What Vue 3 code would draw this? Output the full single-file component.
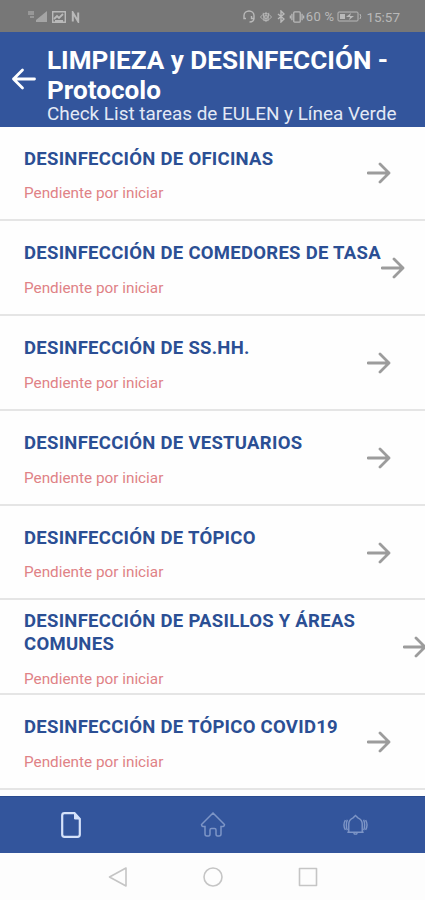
<template>
  <div class="app">
    <!-- Barra de estado -->
    <div class="statusbar">
      <div class="status-left">
        <svg class="signal" viewBox="0 0 21 14">
          <path class="net" d="M1 1v4M3 1v4M5 1v4M2 7h4" />
          <path class="bars" d="M8 12V10l11-9v11z" />
        </svg>
        <svg class="picture" viewBox="0 0 14 12">
          <rect x="0.5" y="0.5" width="13" height="11" rx="1" />
          <path d="M2 8l3-3 2 2 4-4M3 10h8" />
        </svg>
        <svg class="nfc" viewBox="0 0 10 12">
          <path d="M2 11V1l6 10V1" />
        </svg>
      </div>
      <div class="status-right">
        <svg class="headset" viewBox="0 0 12 13">
          <path d="M3 8.500H1V5.500a5 4.500 0 0 1 10 0v3H8.500V6M11 8q0 4-4.500 4" />
        </svg>
        <svg class="eye" viewBox="0 0 14 13">
          <path d="M1 6.500q6-8 12 0q-6 8-12 0M7 1v11M4 2l1 9M10 2l-1 9" />
          <circle cx="7" cy="6.500" r="2" />
        </svg>
        <svg class="bluetooth" viewBox="0 0 8 13">
          <path d="M1 4l6 5-3 3V1l3 3-6 5" />
        </svg>
        <svg class="vibrate" viewBox="0 0 16 13">
          <rect x="4.500" y="1" width="7" height="11" rx="1" />
          <path d="M2.500 3v7M13.500 3v7M0.800 5v3M15.200 5v3" />
        </svg>
        <span class="percent">60 %</span>
        <svg class="battery" viewBox="0 0 25 11">
          <rect x="1" y="1" width="20" height="9" rx="1" />
          <path class="charge" d="M3 3h5v5H3zM9 6l5-4-1 3h4l-5 4 1-3z" />
          <path d="M23 3q1.500 2.500 0 5" />
        </svg>
        <span class="clock">15:57</span>
      </div>
    </div>

    <!-- Cabecera -->
    <header class="header">
      <svg class="back" viewBox="0 0 24 22">
        <path d="M23 11H2M11 2L2 11l9 9" />
      </svg>
      <div class="heading">
        <h1>LIMPIEZA y DESINFECCIÓN - Protocolo</h1>
        <p>Check List tareas de EULEN y Línea Verde</p>
      </div>
    </header>

    <!-- Lista de tareas -->
    <main class="list">
      <div v-for="task in tasks" :key="task.title" class="row">
        <div class="info">
          <div class="title">{{ task.title }}</div>
          <div class="state">{{ task.state }}</div>
        </div>
        <svg class="arrow" viewBox="0 0 24 22">
          <path d="M1 11h21M13 2l9 9-9 9" />
        </svg>
      </div>
    </main>

    <!-- Pestañas -->
    <nav class="tabs">
      <div v-for="tab in tabs" :key="tab" class="tab" :class="{ active: tab === activeTab }" @click="activeTab = tab">
        <svg v-if="tab === 'doc'" class="doc" viewBox="0 0 20 26">
          <path d="M3.500 1.200H13.500L18.800 7V22.500a2.300 2.300 0 0 1-2.300 2.300H3.500a2.300 2.300 0 0 1-2.300-2.300V3.500a2.300 2.300 0 0 1 2.300-2.300z" />
          <path class="fold" d="M13.500 1.200V7h5.300z" />
        </svg>
        <svg v-else-if="tab === 'home'" class="home" viewBox="0 0 26 26">
          <path d="M13 1L1.500 12.500q0 2.500 3.500 2v7.500q0 2 2 2h1.500q1.500 0 1.500-2v-4q0-1.500 1.500-1.500h3q1.500 0 1.500 1.500v4q0 2 1.500 2H19q2 0 2-2v-7.500q3.500 0.500 3.500-2z" />
        </svg>
        <svg v-else class="bell" viewBox="0 0 26 22">
          <path d="M13 1.200L15.500 3.500q4.500 2 4.500 6.500v8.500H6v-8.500q0-4.500 4.500-6.500zM4.500 18.500h17M11 19.500q2 2 4 0" />
          <path d="M4.500 5.500q-2 5.500 0 11M21.500 5.500q2 5.500 0 11M2.500 6q-3 5 0 10M23.500 6q3 5 0 10" />
        </svg>
      </div>
    </nav>

    <!-- Botones del sistema -->
    <div class="system">
      <svg viewBox="0 0 20 20"><path d="M18 1v18L1.500 10z" /></svg>
      <svg viewBox="0 0 20 20"><circle cx="10" cy="10" r="9" /></svg>
      <svg viewBox="0 0 20 20"><rect x="1.500" y="1.500" width="17" height="17" /></svg>
    </div>
  </div>
</template>

<script setup>
import { ref } from 'vue'

const tasks = ref([
  { title: 'DESINFECCIÓN DE OFICINAS', state: 'Pendiente por iniciar' },
  { title: 'DESINFECCIÓN DE COMEDORES DE TASA', state: 'Pendiente por iniciar' },
  { title: 'DESINFECCIÓN DE SS.HH.', state: 'Pendiente por iniciar' },
  { title: 'DESINFECCIÓN DE VESTUARIOS', state: 'Pendiente por iniciar' },
  { title: 'DESINFECCIÓN DE TÓPICO', state: 'Pendiente por iniciar' },
  { title: 'DESINFECCIÓN DE PASILLOS Y ÁREAS COMUNES', state: 'Pendiente por iniciar' },
  { title: 'DESINFECCIÓN DE TÓPICO COVID19', state: 'Pendiente por iniciar' }
])

const tabs = ['doc', 'home', 'bell']
const activeTab = ref('doc')
</script>

<style>
body {
  background: #fdfdfd;
}
</style>

<style scoped>
.app {
  display: flex;
  flex-direction: column;
  height: 900px;
  overflow: hidden;
  background: #fefefe;
  font-family: Roboto, "Liberation Sans", sans-serif;
}

svg {
  display: block;
  flex: none;
  fill: none;
  stroke: currentColor;
}

/* ===== Barra de estado ===== */
.statusbar {
  flex: none;
  height: 32px;
  box-sizing: border-box;
  display: flex;
  justify-content: space-between;
  align-items: center;
  padding: 1px 25px 0 28px;
  background: #777;
  color: #b9b9b9;
}

.status-left,
.status-right {
  display: flex;
  align-items: center;
}

.signal { width: 21px; height: 14px; }
.bars { fill: #a5a5a5; stroke: none; }
.picture { width: 14px; height: 12px; margin-left: 3px; stroke-width: 1.8; }
.nfc { width: 9px; height: 12px; margin-left: 5px; stroke-width: 2.2; }

.headset { width: 12px; height: 13px; stroke-width: 1.4; }
.eye { width: 14px; height: 12px; margin-left: 4px; }
.bluetooth { width: 8px; height: 13px; margin-left: 4px; stroke-width: 1.4; }
.vibrate { width: 16px; height: 12px; margin-left: 4px; stroke-width: 1.4; }
.battery { width: 25px; height: 11px; margin-left: 3px; }
.charge { fill: currentColor; stroke: none; }

.percent {
  font-size: 13px;
  letter-spacing: 0.3px;
  margin-left: 1px;
}

.clock {
  font-size: 13.5px;
  margin-left: 4px;
}

/* ===== Cabecera ===== */
.header {
  flex: none;
  height: 94.500px;
  box-sizing: border-box;
  display: flex;
  align-items: center;
  padding: 0 0 0 11px;
  background: #33559c;
  color: #fff;
}

.back {
  width: 25px;
  height: 22px;
  stroke-width: 2.8;
  stroke-linecap: round;
  stroke-linejoin: round;
}

.heading {
  margin-left: 11px;
  padding-top: 8px;
}

.heading h1 {
  margin: 0;
  width: 360px;
  font-size: 26.1px;
  line-height: 30px;
  font-weight: 700;
}

.heading p {
  margin: 0;
  font-size: 18.9px;
  line-height: 17px;
  color: #e3e9f5;
  white-space: nowrap;
}

/* ===== Lista ===== */
.list {
  flex: 1;
  min-height: 0;
  overflow: hidden;
}

.row {
  height: 94.8px;
  box-sizing: border-box;
  display: flex;
  align-items: center;
  padding-left: 24px;
  border-bottom: 2px solid #e5e5e5;
}

.info {
  min-width: 343px;
  max-width: 379px;
  padding-top: 5px;
}

.title {
  font-size: 18.5px;
  line-height: 22.7px;
  letter-spacing: 0.28px;
  font-weight: 700;
  color: #2b4f94;
}

.state {
  margin-top: 13px;
  font-size: 15.3px;
  line-height: 20px;
  color: #e08286;
}

.arrow {
  width: 24px;
  height: 22px;
  margin-top: 1px;
  color: #9c9c9c;
  stroke-width: 2.8;
  stroke-linecap: round;
  stroke-linejoin: round;
}

/* el texto en dos líneas empuja la flecha hasta el borde */
.row:nth-child(6) .info {
  width: 379px;
  flex: none;
}

/* ===== Pestañas ===== */
.tabs {
  flex: none;
  height: 57px;
  display: flex;
  background: #33559c;
  box-shadow: inset 0 1px #294a8e;
}

.tab {
  flex: 1;
  display: flex;
  justify-content: center;
  align-items: center;
  color: #7d95c6;
  cursor: pointer;
}

.tab.active { color: #d5e2fa; }

.doc { width: 20px; height: 26px; stroke-width: 2.2; }
.fold { fill: currentColor; stroke-width: 1; }
.home { width: 26px; height: 26px; stroke-width: 1.5; }
.bell { width: 25px; height: 22px; margin-left: 2px; stroke-width: 1.5; }

/* ===== Botones del sistema ===== */
.system {
  flex: none;
  height: 47px;
  display: flex;
  justify-content: center;
  align-items: center;
  gap: 75px;
  background: #fdfdfd;
  color: #c5c5c5;
}

.system svg {
  width: 20px;
  height: 20px;
  stroke-width: 1.6;
  stroke-linejoin: round;
}
</style>
